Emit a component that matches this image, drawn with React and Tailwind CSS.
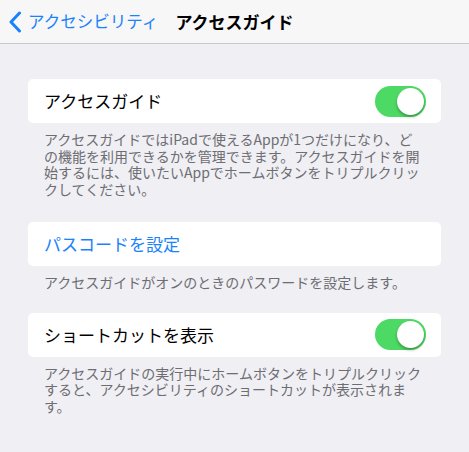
const font = {
  fontFamily: '"Noto Sans CJK JP", "Noto Sans", sans-serif',
};

function Toggle() {
  return (
    <div className="w-[51px] h-[31px] rounded-full bg-[#4cd964] flex items-center justify-end pr-[2px]">
      <div className="w-[27px] h-[27px] rounded-full bg-white shadow-[0_2px_3px_rgba(0,0,0,0.3)]" />
    </div>
  );
}

function Footer({ lines }) {
  return (
    <p className="px-4 pt-[8px] text-[14px] leading-[16.5px] text-[#6d6d72] whitespace-pre">
      {lines.join("\n")}
    </p>
  );
}

export default function App() {
  return (
    <div style={font} className="w-[469px] h-[452px] bg-[#efeff4] overflow-hidden">
      <div className="h-[44px] bg-[#f7f7f7] border-b border-[#c8c7cc] flex items-center relative">
        <div className="flex items-center pl-[8px] text-[#1a82fb] text-[16.5px]">
          <svg width="14" height="22" viewBox="0 0 14 22" className="mr-[6px]">
            <path d="M11.5 2 L3 11 L11.5 20" fill="none" stroke="#1a82fb" strokeWidth="3" strokeLinecap="round" strokeLinejoin="round" />
          </svg>
          <span>アクセシビリティ</span>
        </div>
        <div className="absolute left-0 right-0 text-center text-[17px] font-bold text-black pointer-events-none">
          アクセスガイド
        </div>
      </div>

      <div className="px-[28px] pt-[35px]">
        <div className="h-[44px] bg-white rounded-[5px] flex items-center justify-between pl-4 pr-[15px] text-[17px] text-black">
          <span>アクセスガイド</span>
          <Toggle />
        </div>
        <Footer
          lines={[
            "アクセスガイドではiPadで使えるAppが1つだけになり、ど",
            "の機能を利用できるかを管理できます。アクセスガイドを開",
            "始するには、使いたいAppでホームボタンをトリプルクリッ",
            "クしてください。",
          ]}
        />

        <div className="mt-[25px] h-[44px] bg-white rounded-[5px] flex items-center pl-4 text-[17px] text-[#1a82fb]">
          パスコードを設定
        </div>
        <Footer lines={["アクセスガイドがオンのときのパスワードを設定します。"]} />

        <div className="mt-[22px] h-[44px] bg-white rounded-[5px] flex items-center justify-between pl-4 pr-[15px] text-[17px] text-black">
          <span>ショートカットを表示</span>
          <Toggle />
        </div>
        <Footer
          lines={[
            "アクセスガイドの実行中にホームボタンをトリプルクリック",
            "すると、アクセシビリティのショートカットが表示されま",
            "す。",
          ]}
        />
      </div>
    </div>
  );
}
